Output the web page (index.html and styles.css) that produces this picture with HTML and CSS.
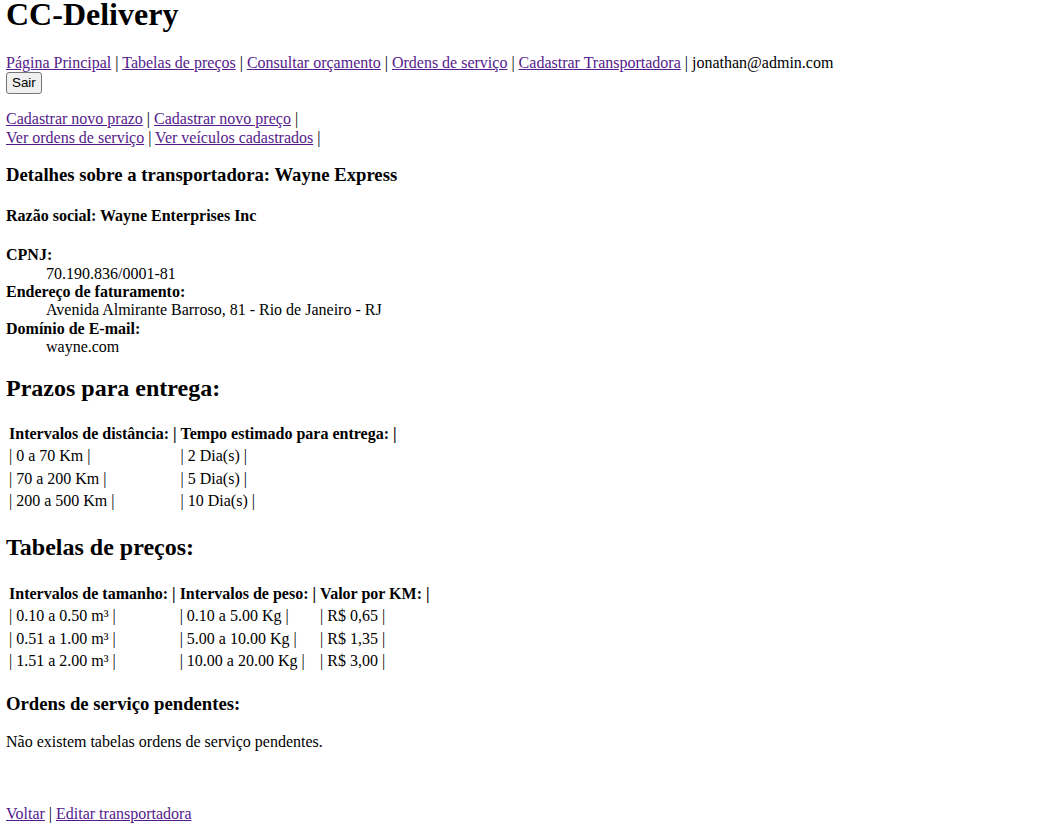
FILE: index.html
```html
<!DOCTYPE html>
<html lang="pt-BR">
<head>
<meta charset="utf-8">
<title>CC-Delivery</title>
<link rel="stylesheet" href="styles.css">
</head>
<body>
<header class="site-header">
  <h1 class="site-title">CC-Delivery</h1>
  <nav class="main-nav">
    <a href="#">Página Principal</a> | <a href="#">Tabelas de preços</a> | <a href="#">Consultar orçamento</a> | <a href="#">Ordens de serviço</a> | <a href="#">Cadastrar Transportadora</a> | jonathan@admin.com
    <form class="logout-form"><button type="button" class="logout-btn">Sair</button></form>
  </nav>
</header>
<main>
  <p class="sub-nav">
    <a href="#">Cadastrar novo prazo</a> | <a href="#">Cadastrar novo preço</a> |<br>
    <a href="#">Ver ordens de serviço</a> | <a href="#">Ver veículos cadastrados</a> |
  </p>

  <h3 class="section-title">Detalhes sobre a transportadora: Wayne Express</h3>
  <h4 class="company-name">Razão social: Wayne Enterprises Inc</h4>
  <dl class="details">
    <dt>CPNJ:</dt>
    <dd>70.190.836/0001-81</dd>
    <dt>Endereço de faturamento:</dt>
    <dd>Avenida Almirante Barroso, 81 - Rio de Janeiro - RJ</dd>
    <dt>Domínio de E-mail:</dt>
    <dd>wayne.com</dd>
  </dl>

  <h2 class="block-title">Prazos para entrega:</h2>
  <table class="data-table">
    <thead>
      <tr><th>Intervalos de distância: |</th><th>Tempo estimado para entrega: |</th></tr>
    </thead>
    <tbody>
      <tr><td>| 0 a 70 Km |</td><td>| 2 Dia(s) |</td></tr>
      <tr><td>| 70 a 200 Km |</td><td>| 5 Dia(s) |</td></tr>
      <tr><td>| 200 a 500 Km |</td><td>| 10 Dia(s) |</td></tr>
    </tbody>
  </table>

  <h2 class="block-title prices-title">Tabelas de preços:</h2>
  <table class="data-table">
    <thead>
      <tr><th>Intervalos de tamanho: |</th><th>Intervalos de peso: |</th><th>Valor por KM: |</th></tr>
    </thead>
    <tbody>
      <tr><td>| 0.10 a 0.50 m³ |</td><td>| 0.10 a 5.00 Kg |</td><td>| R$ 0,65 |</td></tr>
      <tr><td>| 0.51 a 1.00 m³ |</td><td>| 5.00 a 10.00 Kg |</td><td>| R$ 1,35 |</td></tr>
      <tr><td>| 1.51 a 2.00 m³ |</td><td>| 10.00 a 20.00 Kg |</td><td>| R$ 3,00 |</td></tr>
    </tbody>
  </table>

  <h3 class="section-title orders-title">Ordens de serviço pendentes:</h3>
  <p class="empty-msg">Não existem tabelas ordens de serviço pendentes.</p>
  <br>
  <p class="footer-nav"><a href="#">Voltar</a> | <a href="#">Editar transportadora</a></p>
</main>
</body>
</html>
```
FILE: styles.css
```css
html {
  background: #fff;
}
body {
  margin: 0 6px;
  font-family: "Liberation Serif", "Times New Roman", serif;
  font-size: 16px;
  line-height: 1.15;
  color: #000;
}
a {
  color: #551a8b;
}
.site-title {
  font-size: 32px;
  font-weight: bold;
  line-height: 28px;
  margin: 0 0 26px;
}
.main-nav {
  margin: 0;
}
.logout-form {
  margin: 0;
}
.logout-btn {
  font-family: "Liberation Sans", Arial, sans-serif;
  font-size: 13.333px;
  line-height: 16px;
  padding: 2px 5px;
  border: 1px solid #767676;
  border-radius: 3px;
  background: #efefef;
  color: #000;
}
.sub-nav {
  margin: 16px 0;
}
.section-title {
  font-size: 18.72px;
  margin: 16.7px 0 18.72px;
}
.orders-title {
  margin-top: 19.7px;
}
.company-name {
  font-size: 16px;
  margin: 21.28px 0;
}
.details {
  margin: 16px 0;
}
.details dt {
  font-weight: bold;
}
.details dd {
  margin-left: 40px;
}
.block-title {
  font-size: 24px;
  margin: 17.9px 0 19.92px;
}
.prices-title {
  margin-top: 20.9px;
}
.data-table {
  border-spacing: 2px;
}
.data-table th,
.data-table td {
  padding: 1px;
  text-align: left;
}
.empty-msg {
  margin: 16px 0;
}
.footer-nav {
  margin: 19px 0 16px;
}
```
